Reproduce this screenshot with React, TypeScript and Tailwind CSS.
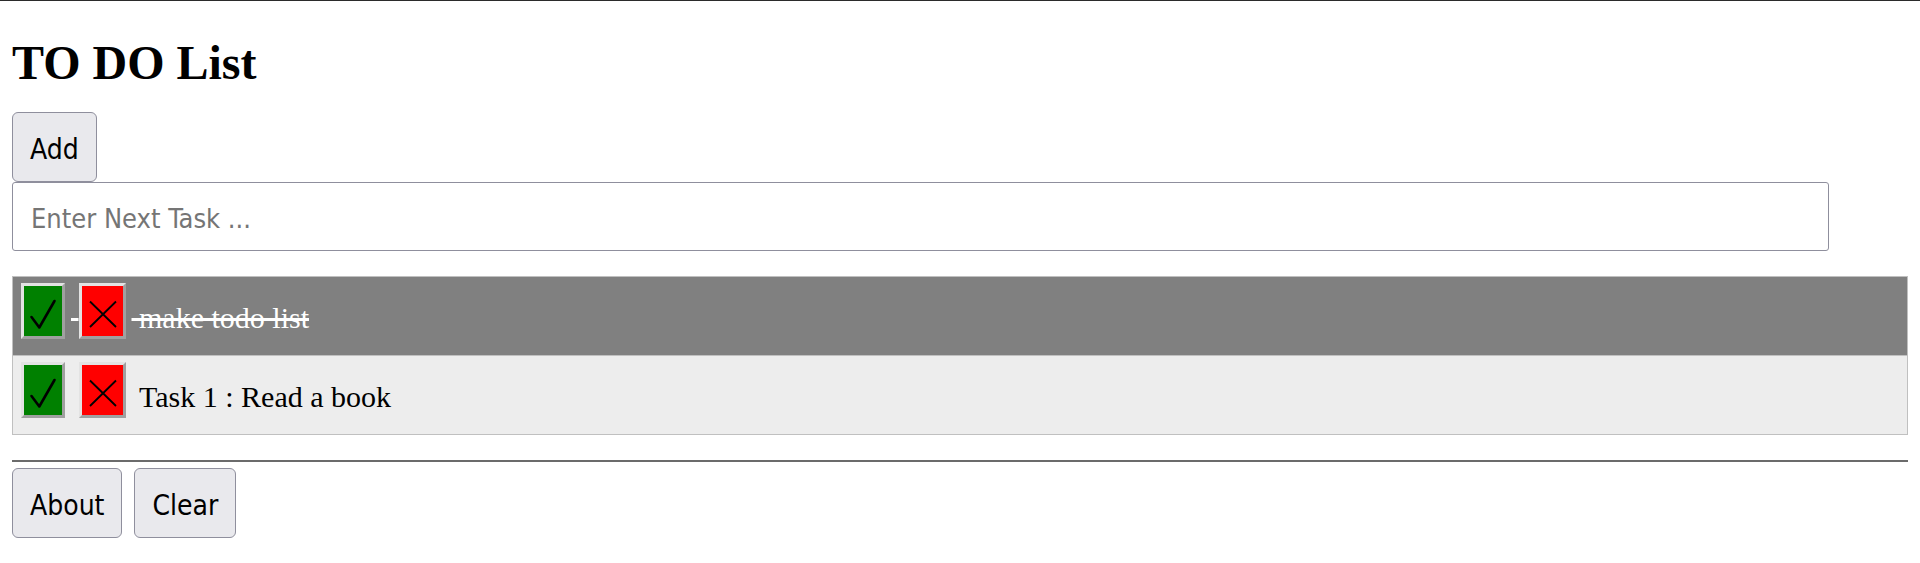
import { useState } from "react";

type Task = { id: number; text: string; done: boolean };

function CheckIcon() {
  return (
    <svg width="38" height="50" viewBox="0 0 38 50" fill="none">
      <path
        d="M7.5 31 L15.3 41.5 L30.5 15"
        stroke="black"
        strokeWidth="2.6"
        strokeLinecap="round"
        strokeLinejoin="round"
      />
    </svg>
  );
}

function CrossIcon() {
  return (
    <svg width="41" height="50" viewBox="0 0 41 50" fill="none">
      <path d="M8 15.5 L34 41 M34 15.5 L8 41" stroke="black" strokeWidth="1.8" />
    </svg>
  );
}

const btnClass =
  "h-[70px] px-[17px] pt-[5px] border border-[#8f8f9d] bg-[#e9e9ed] rounded-[6px] text-[28px] text-black font-['DejaVu_Sans_Condensed','DejaVu_Sans',sans-serif] [font-stretch:condensed]";

export default function App() {
  const [tasks, setTasks] = useState<Task[]>([
    { id: 1, text: "make todo list", done: true },
    { id: 2, text: "Task 1 : Read a book", done: false },
  ]);
  const [input, setInput] = useState("");

  const addTask = () => {
    if (!input.trim()) return;
    setTasks((prev) => [...prev, { id: Date.now(), text: input, done: false }]);
    setInput("");
  };

  const toggleTask = (id: number) =>
    setTasks((prev) => prev.map((t) => (t.id === id ? { ...t, done: !t.done } : t)));

  const removeTask = (id: number) => setTasks((prev) => prev.filter((t) => t.id !== id));

  return (
    <div className="min-h-[563px] bg-white font-['Liberation_Serif',serif] text-black">
      <div className="h-px bg-[#2b2b2b]" />
      <div className="px-[12px]">
        <h1 className="mt-[38px] text-[48px] font-bold leading-none">TO DO List</h1>

        <button className={`mt-[25px] block ${btnClass}`} onClick={addTask}>
          Add
        </button>
        <input
          value={input}
          onChange={(e) => setInput(e.target.value)}
          placeholder="Enter Next Task ..."
          className="block h-[69px] w-[1817px] border border-[#8f8f9d] rounded-[3px] px-[18px] pt-[3px] text-[27px] outline-none placeholder:text-[#757575] font-['DejaVu_Sans_Condensed','DejaVu_Sans',sans-serif] [font-stretch:condensed]"
        />

        <ul className="mt-[25px] border border-[#c0c0c0]">
          {tasks.map((t, i) => (
            <li
              key={t.id}
              className={`flex h-[78px] items-start pl-[8px] ${
                t.done ? "bg-[#808080] text-white" : "bg-[#ededed] text-black"
              } ${i < tasks.length - 1 ? "box-content border-b border-[#c0c0c0]" : ""}`}
            >
              <button
                onClick={() => toggleTask(t.id)}
                className="mt-[6px] flex h-[56px] w-[44px] items-center justify-center border-[3px] border-t-[#e3e3e3] border-l-[#e3e3e3] border-r-[#a0a0a0] border-b-[#a0a0a0] bg-[#008000]"
              >
                <CheckIcon />
              </button>
              <span
                className={`ml-[6px] mt-[26px] text-[30px] leading-none ${
                  t.done ? "line-through decoration-white" : ""
                }`}
              >
                {"\u00a0"}
              </span>
              <button
                onClick={() => removeTask(t.id)}
                className="mt-[6px] flex h-[56px] w-[47px] items-center justify-center border-[3px] border-t-[#e3e3e3] border-l-[#e3e3e3] border-r-[#a0a0a0] border-b-[#a0a0a0] bg-[#ff0000]"
              >
                <CrossIcon />
              </button>
              <span
                className={`ml-[6px] mt-[26px] text-[30px] leading-none whitespace-pre ${
                  t.done ? "line-through decoration-white" : ""
                }`}
              >
                {"\u00a0" + t.text}
              </span>
            </li>
          ))}
        </ul>

        <div className="mt-[25px] h-[2px] bg-[#6b6b6b]" />

        <div className="mt-[6px] flex gap-[12px]">
          <button className={btnClass}>About</button>
          <button className={btnClass} onClick={() => setTasks([])}>
            Clear
          </button>
        </div>
      </div>
    </div>
  );
}
